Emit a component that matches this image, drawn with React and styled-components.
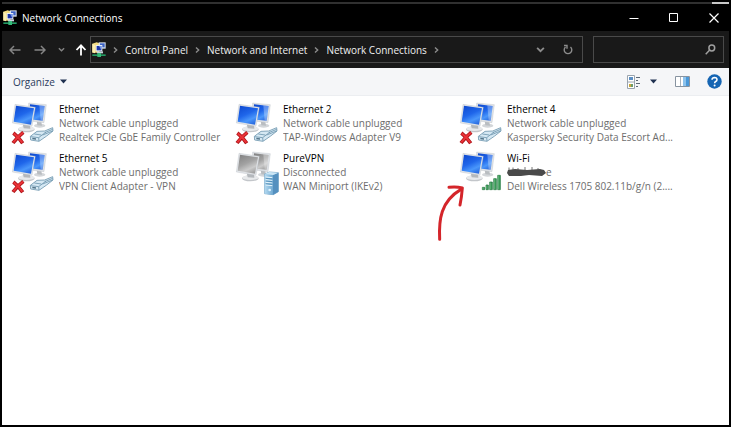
import React, { useState } from 'react'
import styled, { createGlobalStyle } from 'styled-components'

const GlobalStyle = createGlobalStyle`
    * {
        box-sizing: border-box;
    }

    body {
        margin: 0;
        background-color: #000000;
        font-family: "Open Sans", "Noto Sans", sans-serif;
        font-size: 10px;
    }
`;

const Window = styled.div`
    min-height: 100vh;
    display: flex;
    flex-direction: column;
    background-color: #000000;
    padding: 2px;
`;

const TopEdge = styled.div`
    height: 2px;
    background-color: #303030;
    display: flex;
    justify-content: flex-end;

    &::after {
        content: '';
        width: 17px;
        background-color: #c8c8c8;
    }
`;

const TitleBar = styled.header`
    height: 27px;
    display: flex;
    align-items: center;
    gap: 5px;
    padding-left: 1px;
    color: #ffffff;
`;

const Title = styled.h1`
    margin: 0;
    flex: 1;
    font-size: 10px;
    font-weight: 400;
    line-height: 14px;
`;

const PlainButton = styled.button`
    display: flex;
    align-items: center;
    justify-content: center;
    padding: 0;
    border: none;
    background: none;
    color: inherit;
    font: inherit;
    cursor: pointer;
`;

const WindowButtons = styled.div`
    display: flex;
    gap: 10px;
`;

const WindowButton = styled(PlainButton)`
    width: 30px;
    height: 26px;
`;

const NavBar = styled.nav`
    height: 37px;
    display: flex;
    align-items: center;
    background-color: #191919;
    padding-right: 5px;
    color: #f0f0f0;
`;

const NavButton = styled(PlainButton)`
    width: ${props => props.$narrow ? '19px' : '25px'};
    height: 26px;
    color: ${props => props.$active ? '#ffffff' : '#858585'};
`;

const AddressBar = styled.div`
    flex: 1;
    height: 27px;
    display: flex;
    align-items: center;
    border: 1px solid #4a4a4a;
    padding-left: 1px;
    margin-right: 10px;
`;

const Crumbs = styled.div`
    flex: 1;
    display: flex;
    align-items: center;
    gap: 7px;
    color: #8c8c8c;
    white-space: nowrap;
`;

const Crumb = styled.a`
    color: #f0f0f0;
    line-height: 14px;
    text-decoration: none;
`;

const AddressButton = styled(PlainButton)`
    width: 28px;
    height: 25px;
    color: #8c8c8c;
`;

const SearchBox = styled.label`
    width: 131px;
    height: 27px;
    display: flex;
    align-items: center;
    border: 1px solid #4a4a4a;
    padding-right: 7px;
    color: #a0a0a0;
`;

const SearchInput = styled.input`
    flex: 1;
    min-width: 0;
    border: none;
    outline: none;
    background: none;
    color: #ffffff;
    font: inherit;
    padding: 0 6px;
`;

const Toolbar = styled.div`
    height: 28px;
    display: flex;
    align-items: center;
    justify-content: space-between;
    background-color: #f5f6f8;
    border-bottom: 1px solid #eceef1;
    padding: 0 7px 0 11px;
    color: #2b3b5c;
`;

const OrganizeButton = styled(PlainButton)`
    gap: 5px;
    line-height: 14px;
`;

const ToolGroup = styled.div`
    display: flex;
    align-items: center;
`;

const ToolButton = styled(PlainButton)`
    height: 20px;
    margin-left: ${props => props.$gap || '0'};
`;

const Content = styled.main`
    flex: 1;
    background-color: #ffffff;
    padding: 4px 8px;
`;

const ConnectionGrid = styled.ul`
    list-style: none;
    margin: 0;
    padding: 0;
    display: grid;
    grid-template-columns: repeat(auto-fill, 224px);
    row-gap: 2px;
`;

const Connection = styled.li`
    position: relative;
    display: flex;
    gap: 4px;
`;

const Details = styled.div`
    padding-top: 2px;
    width: 172px;
    color: #6d6d6d;
    line-height: 14px;
`;

const Line = styled.div`
    overflow: hidden;
    white-space: nowrap;
    text-overflow: ellipsis;
    color: ${props => props.$name ? '#000000' : 'inherit'};
`;

const HiddenName = styled(Line)`
    display: flex;
    align-items: center;
`;

const ArrowMark = styled.svg`
    position: absolute;
    left: -23px;
    top: 34px;
`;

const NetworkIcon = () => (
    <svg width="14" height="15" viewBox="0 0 42 45" aria-hidden="true">
        <path d="M1 5 L14 1 L22 4 V32 H1z" fill="#f3dd82" />
        <path d="M1 5 L9 9 V34 L1 31z" fill="#fbeeb0" />
        <path d="M20 1 H41 V20 H20z" fill="#d8e2ee" />
        <path d="M24 4 H38 V16 H24z" fill="#3c62c4" />
        <path d="M11 9 H31 V28 H11z" fill="#e8eef6" />
        <path d="M14 12 H28 V25 H14z" fill="#1d36a8" />
        <path d="M21 12 H28 V25z" fill="#6f97ea" />
        <path d="M15 28 H33 V34 H15z" fill="#c9d2dc" />
        <path d="M1 37 H41 V42 H1z" fill="#239a63" />
        <path d="M16 33 H27 V45 H16z" fill="#35b878" />
    </svg>
)

const Arrow = ({ up, flip }) => (
    <svg width="12" height="12" viewBox="0 0 12 12" fill="none" stroke="currentColor" strokeWidth={up ? 1.8 : 1.5} aria-hidden="true">
        {up
            ? <path d="M6 11.5 V1.5 M1.5 6 L6 1.3 L10.5 6" />
            : <path d={flip ? 'M0.5 6 H11 M7 2 L11 6 L7 10' : 'M11.5 6 H1 M5 2 L1 6 L5 10'} />
        }
    </svg>
)

const Chevron = () => (
    <svg width="5" height="8" viewBox="0 0 5 8" fill="none" stroke="currentColor" strokeWidth="1.4" aria-hidden="true">
        <path d="M1 1.5 L3.7 4 L1 6.5" />
    </svg>
)

const ChevronDown = ({ size }) => (
    <svg width={size} height={size} viewBox="0 0 8 8" fill="none" stroke="currentColor" strokeWidth="1.6" aria-hidden="true">
        <path d="M1 2.5 L4 5.5 L7 2.5" />
    </svg>
)

const Caret = () => (
    <svg width="7" height="5" viewBox="0 0 7 5" aria-hidden="true">
        <path d="M0 0.5 H7 L3.5 4.5z" fill="#1f3050" />
    </svg>
)

const Gradients = () => (
    <svg width="0" height="0" style={{ display: 'block' }} aria-hidden="true">
        <defs>
            <linearGradient id="blue" x1="0.2" y1="0" x2="0.7" y2="1">
                <stop offset="0" stopColor="#0f4bd2" />
                <stop offset="0.45" stopColor="#1f66ea" />
                <stop offset="0.75" stopColor="#4a97fb" />
                <stop offset="1" stopColor="#2a6be0" />
            </linearGradient>
            <linearGradient id="grey" x1="0.2" y1="0" x2="0.7" y2="1">
                <stop offset="0" stopColor="#848484" />
                <stop offset="0.45" stopColor="#a2a2a2" />
                <stop offset="0.75" stopColor="#cbcbcb" />
                <stop offset="1" stopColor="#a0a0a0" />
            </linearGradient>
            <linearGradient id="server" x1="0" y1="0" x2="1" y2="0">
                <stop offset="0" stopColor="#b4d9f0" />
                <stop offset="1" stopColor="#6fa9d2" />
            </linearGradient>
            <linearGradient id="bars" x1="0" y1="0" x2="1" y2="0">
                <stop offset="0" stopColor="#7fcb93" />
                <stop offset="1" stopColor="#1f8741" />
            </linearGradient>
        </defs>
    </svg>
)

const Monitors = ({ screen }) => (
    <g>
        <ellipse cx="119" cy="92" rx="17" ry="6" fill="#d3d6d9" />
        <path d="M110 78 L124 80 L126 92 L112 91z" fill="#b9bdc1" />
        <path d="M86 24 L139 29 L132 83 L84 77z" fill="#dfe2e6" stroke="#b4b9be" />
        <path d="M90 28 L134 33 L128 77 L88 73z" fill={screen} />
        <path d="M118 31 L134 33 L128 77 L122 76z" fill="#ffffff" opacity="0.3" />
        <ellipse cx="79" cy="103" rx="25" ry="9" fill="#c3c6ca" />
        <ellipse cx="79" cy="101" rx="24" ry="7" fill="#e8eaec" />
        <path d="M68 86 L90 89 L91 101 L71 100z" fill="#b4b8bc" />
        <path d="M45 28 L106 37 L96 94 L37 84z" fill="#e2e5e9" stroke="#b4b9be" />
        <path d="M48 32 L102 40 L93 89 L41 80z" fill={screen} />
    </g>
)

const Unplugged = () => (
    <g>
        <path d="M91 124 L111 109 L134 108 L158 98 L159 108 L140 123 L117 139 L92 135z" fill="#d5e8f3" stroke="#6f96ae" strokeWidth="2.5" />
        <path d="M92 125 L116 128 L117 138 M116 128 L138 111 M103 117 L124 120 M134 113 L158 103 M128 120 L158 108" fill="none" stroke="#6f96ae" strokeWidth="2.5" />
        <path d="M97 128 L108 130 V134 L97 133z" fill="#54758a" />
        <path d="M40 114 Q55 125 68 145 M70 112 Q53 125 39 144" fill="none" stroke="#a90f14" strokeWidth="11" />
        <path d="M41 115 Q55 125 67 143 M69 113 Q53 125 40 142" fill="none" stroke="#ea3338" strokeWidth="6" />
    </g>
)

const Server = () => (
    <g>
        <path d="M122 90 L136 84 L163 86 V143 L148 152 L122 149z" fill="#8fc2e4" stroke="#5c92b8" strokeWidth="2" />
        <path d="M122 90 L147 93 V152 L122 149z" fill="url(#server)" />
        <path d="M147 93 L163 86 V143 L147 152z" fill="#5490bf" />
        <path d="M122 90 L136 84 L163 86 L147 93z" fill="#cce6f5" />
        <path d="M125 99 L145 101 M125 107 L145 109 M125 115 L145 117 M125 123 L145 125" stroke="#e6f5fc" strokeWidth="3" />
        <path d="M125 103 L145 105 M125 111 L145 113 M125 119 L145 121" stroke="#3778a8" strokeWidth="2" />
        <circle cx="137" cy="138" r="4" fill="#dff3ff" />
    </g>
)

const SignalBars = () => (
    <g fill="url(#bars)" stroke="#1d7339" strokeWidth="2">
        <path d="M103 130 H110 V137 H103z" />
        <path d="M114 123 H121 V137 H114z" />
        <path d="M125 114 H133 V137 H125z" />
        <path d="M137 104 H145 V137 H137z" />
        <path d="M149 94 H157 V137 H149z" />
    </g>
)

const ConnectionIcon = ({ status }) => (
    <svg width="45" height="47" viewBox="30 15 135 141" aria-hidden="true">
        <Monitors screen={status === 'disconnected' ? 'url(#grey)' : 'url(#blue)'} />
        {status === 'unplugged' && <Unplugged />}
        {status === 'disconnected' && <Server />}
        {status === 'wifi' && <SignalBars />}
    </svg>
)

const Scribble = () => (
    <svg width="39" height="12" viewBox="0 0 39 12" aria-hidden="true">
        <path d="M2 1.5 V5 M6 1.5 V5 M11 2 V4 M18 1 V4 M25 1 V4 M31 2 V4" stroke="#777777" />
        <path d="M1 4 L8 3 L20 4 L33 3 L37 4 L39 7 L35 10 L22 9 L14 10 L2 10 L0 7z" fill="#4a4a4a" />
    </svg>
)

const connections = [
    { name: 'Ethernet', text: 'Network cable unplugged', device: 'Realtek PCIe GbE Family Controller', status: 'unplugged' },
    { name: 'Ethernet 2', text: 'Network cable unplugged', device: 'TAP-Windows Adapter V9', status: 'unplugged' },
    { name: 'Ethernet 4', text: 'Network cable unplugged', device: 'Kaspersky Security Data Escort Ad...', status: 'unplugged' },
    { name: 'Ethernet 5', text: 'Network cable unplugged', device: 'VPN Client Adapter - VPN', status: 'unplugged' },
    { name: 'PureVPN', text: 'Disconnected', device: 'WAN Miniport (IKEv2)', status: 'disconnected' },
    { name: 'Wi-Fi', text: 'e', device: 'Dell Wireless 1705 802.11b/g/n (2....', status: 'wifi' }
]

const crumbs = ['Control Panel', 'Network and Internet', 'Network Connections']

const App = () => {

    const [search, setSearch] = useState('')

    return (
        <Window>
            <GlobalStyle />
            <Gradients />
            <TopEdge />
            <TitleBar>
                <NetworkIcon />
                <Title>Network Connections</Title>
                <WindowButtons>
                    <WindowButton aria-label="Minimize">
                        <svg width="10" height="10" viewBox="0 0 10 10" stroke="#ffffff"><path d="M0.5 5.5 H9.5" /></svg>
                    </WindowButton>
                    <WindowButton aria-label="Maximize">
                        <svg width="10" height="10" viewBox="0 0 10 10" fill="none" stroke="#ffffff"><path d="M0.5 0.5 H8.5 V8.5 H0.5z" /></svg>
                    </WindowButton>
                    <WindowButton aria-label="Close">
                        <svg width="10" height="10" viewBox="0 0 10 10" stroke="#ffffff" strokeWidth="1.2"><path d="M0.5 0.5 L9.5 9.5 M9.5 0.5 L0.5 9.5" /></svg>
                    </WindowButton>
                </WindowButtons>
            </TitleBar>
            <NavBar>
                <NavButton aria-label="Back"><Arrow /></NavButton>
                <NavButton aria-label="Forward"><Arrow flip /></NavButton>
                <NavButton $narrow aria-label="Recent locations"><ChevronDown size={7} /></NavButton>
                <NavButton $narrow $active aria-label="Up"><Arrow up /></NavButton>
                <AddressBar>
                    <Crumbs>
                        <NetworkIcon />
                        <Chevron />
                        {crumbs.map(crumb => (
                            <React.Fragment key={crumb}>
                                <Crumb href="#">{crumb}</Crumb>
                                <Chevron />
                            </React.Fragment>
                        ))}
                    </Crumbs>
                    <AddressButton aria-label="Previous locations"><ChevronDown size={9} /></AddressButton>
                    <AddressButton aria-label="Refresh">
                        <svg width="10" height="11" viewBox="0 0 10 11" fill="none" stroke="currentColor" strokeWidth="1.4">
                            <path d="M7.5 3 A3.8 3.8 0 1 1 2.5 3" />
                            <path d="M1 1.5 H4 V4.8" />
                        </svg>
                    </AddressButton>
                </AddressBar>
                <SearchBox>
                    <SearchInput aria-label="Search" value={search} onChange={(e) => setSearch(e.target.value)} />
                    <svg width="11" height="11" viewBox="0 0 11 11" fill="none" stroke="currentColor" strokeWidth="1.5" aria-hidden="true">
                        <circle cx="6.8" cy="4" r="2.9" />
                        <path d="M4.7 6.1 L0.7 10.2" />
                    </svg>
                </SearchBox>
            </NavBar>
            <Toolbar>
                <OrganizeButton>Organize <Caret /></OrganizeButton>
                <ToolGroup>
                    <ToolButton aria-label="Change your view">
                        <svg width="13" height="14" viewBox="0 0 13 14">
                            <path d="M0.5 0.5 H7.5 V13.5 H0.5z M0.5 7 H7.5" fill="#ffffff" stroke="#9aa4ae" />
                            <path d="M2 2 H6 V5 H2z" fill="#5c8fc4" />
                            <path d="M2 9 H4 V12 H2z" fill="#c9a63c" />
                            <path d="M4 9 H6 V12 H4z" fill="#6d9c6a" />
                            <path d="M9 2.5 H13 M9 5.5 H11 M9 8.5 H13 M9 11.5 H11" stroke="#5d6976" />
                        </svg>
                    </ToolButton>
                    <ToolButton $gap="10px" aria-label="More options"><Caret /></ToolButton>
                    <ToolButton $gap="18px" aria-label="Show the preview pane">
                        <svg width="15" height="11" viewBox="0 0 15 11">
                            <path d="M0.5 0.5 H14.5 V10.5 H0.5z" fill="#ffffff" stroke="#8793a0" />
                            <path d="M5.5 1 V10" stroke="#a9b2bb" />
                            <path d="M8 1 H14 V10 H8z" fill="#4a98d8" />
                            <path d="M8 1 H11 V10 H8z" fill="#8cc2ec" />
                        </svg>
                    </ToolButton>
                    <ToolButton $gap="17px" aria-label="Help">
                        <svg width="15" height="15" viewBox="0 0 15 15">
                            <circle cx="7.5" cy="7.5" r="7.2" fill="#1565b3" />
                            <path d="M5 5.8 Q5.2 3.6 7.5 3.6 Q10 3.7 10 5.7 Q10 6.8 8.7 7.5 Q7.6 8.1 7.6 9.3" fill="none" stroke="#ffffff" strokeWidth="1.5" />
                            <circle cx="7.6" cy="11.4" r="1" fill="#ffffff" />
                        </svg>
                    </ToolButton>
                </ToolGroup>
            </Toolbar>
            <Content>
                <ConnectionGrid>
                    {connections.map(item => (
                        <Connection key={item.name}>
                            <ConnectionIcon status={item.status} />
                            <Details>
                                <Line $name>{item.name}</Line>
                                {item.status === 'wifi'
                                    ? <HiddenName><Scribble />{item.text}</HiddenName>
                                    : <Line>{item.text}</Line>
                                }
                                <Line>{item.device}</Line>
                            </Details>
                            {item.status === 'wifi' &&
                                <ArrowMark width="32" height="60" viewBox="45 40 96 180" fill="none" stroke="#d4252a" strokeWidth="9" strokeLinecap="round" strokeLinejoin="round" aria-hidden="true">
                                    <path d="M59 209 C56 150 62 95 123 59" />
                                    <path d="M87 53 Q108 50 127 55 Q125 82 120 106" />
                                </ArrowMark>
                            }
                        </Connection>
                    ))}
                </ConnectionGrid>
            </Content>
        </Window>
    )
}

export default App
